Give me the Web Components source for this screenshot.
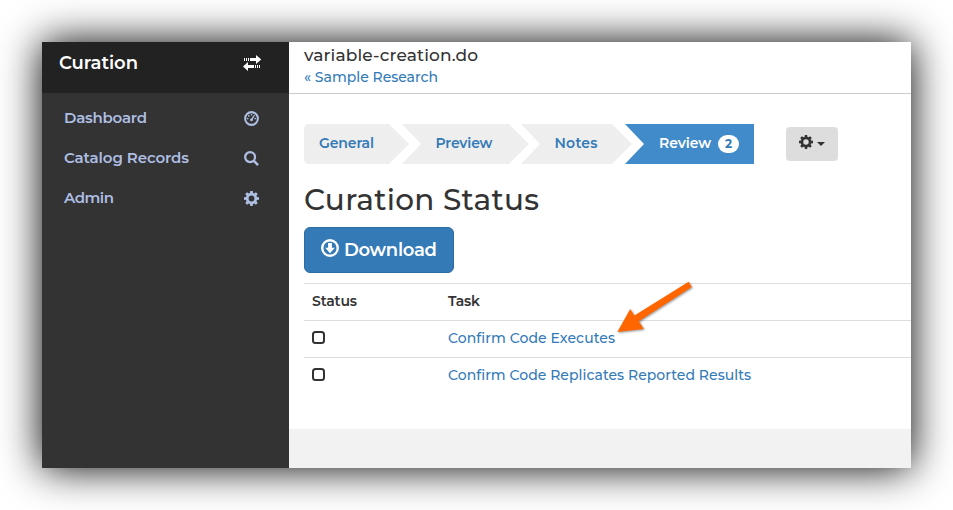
<!DOCTYPE html>
<html lang="en"><head><meta charset="utf-8"><title>Curation</title>
<style>
html,body{margin:0;width:953px;height:510px;overflow:hidden;background:#fff}
body{font-family:Montserrat,Inter,"Open Sans",sans-serif;color:#333}
</style></head><body>
<curation-app></curation-app>
<script>
const define=(name,html,setup)=>customElements.define(name,class extends HTMLElement{
  connectedCallback(){
    if(this.shadowRoot)return;
    const t=document.createElement('template');t.innerHTML=html;
    this.attachShadow({mode:'open'}).append(t.content.cloneNode(true));
    if(setup)setup(this,this.shadowRoot);
  }
});

// Text tracked out evenly to a given run width.
define('tracked-text','<style>:host{display:inline-block;white-space:pre;flex:none}span{display:inline-block}</style><span><slot></slot></span>',(el,r)=>{
  const s=r.querySelector('span'),w=+el.getAttribute('width'),n=el.textContent.length;
  const ls=(w-s.getBoundingClientRect().width)/(n-1);
  s.style.letterSpacing=ls+'px';s.style.marginRight=-ls+'px';
});

const gear='<path fill-rule="evenodd" d="M6.7 0h2.6l.4 2.2 1.2.5L12.7 1.4l1.9 1.9-1.3 1.8.5 1.2 2.2.4v2.6l-2.2.4-.5 1.2 1.3 1.8-1.9 1.9-1.8-1.3-1.2.5L9.3 16H6.7l-.4-2.2-1.2-.5-1.8 1.3-1.9-1.9 1.3-1.8-.5-1.2L0 9.3V6.7l2.2-.4.5-1.2-1.3-1.8 1.9-1.9 1.8 1.3 1.2-.5zM8 4.9a3.1 3.1 0 1 0 0 6.2a3.1 3.1 0 1 0 0-6.2z"/>';
const icons={
  gear,
  swap:'<path d="M1 3h1v3H1zM3 3h1v3H3zM5 3h1v3H5zM7 3h6V0l5.2 4.5L13 9V6H7zM17 10h-1v3h1zM15 10h-1v3h1zM13 10h-1v3h1zM11 10H5V7L0 11.5 5 16v-3h6z"/>',
  dash:'<circle cx="8" cy="8" r="6.8" fill="none" stroke="currentColor" stroke-width="2.2"/><circle cx="3.9" cy="8" r=".9"/><circle cx="5.1" cy="5.2" r=".9"/><circle cx="8" cy="4" r=".9"/><circle cx="12" cy="8" r=".9"/><path d="M10.7 4.1l1 .7-2.3 3.6a1.6 1.6 0 1 1-1.3-.7z"/>',
  search:'<circle cx="6.5" cy="6.5" r="5.3" fill="none" stroke="currentColor" stroke-width="2.4"/><path d="M10.2 10.2l4.8 4.8" stroke="currentColor" stroke-width="2.8"/>',
  down:'<circle cx="8" cy="8" r="6.9" fill="none" stroke="currentColor" stroke-width="2.1"/><path d="M6.3 3.5h3.4v4.2h2.6L8 12.6 3.7 7.7h2.6z"/>'
};
define('ui-icon','<style>:host{display:block;flex:none}svg{display:block;fill:currentColor}</style><svg></svg>',(el,r)=>{
  const s=r.querySelector('svg'),n=el.getAttribute('name'),w=el.getAttribute('size')||15;
  s.setAttribute('viewBox',n==='swap'?'0 0 18 16':'0 0 16 16');
  s.setAttribute('width',n==='swap'?18:w);s.setAttribute('height',w);s.innerHTML=icons[n];
});

define('side-item','<style>:host{display:flex;height:40px;align-items:center;justify-content:space-between;padding:0 30px 0 22px;color:#afbfe3;font-size:15px;font-weight:600;line-height:40px}</style><slot></slot><slot name="icon"></slot>');

define('side-bar',`<style>
:host{display:block;background:#333;width:247px}
header{background:#222;height:51px;box-sizing:border-box;display:flex;align-items:center;justify-content:space-between;padding:0 28px 9px 17px;color:#fff;font-size:18px;font-weight:600;line-height:42px}
nav{padding-top:5px}
</style><header><tracked-text width="79">Curation</tracked-text><ui-icon name="swap" size="16"></ui-icon></header>
<nav>
<side-item><tracked-text width="83">Dashboard</tracked-text><ui-icon slot="icon" name="dash"></ui-icon></side-item>
<side-item><tracked-text width="125">Catalog Records</tracked-text><ui-icon slot="icon" name="search"></ui-icon></side-item>
<side-item><tracked-text width="50">Admin</tracked-text><ui-icon slot="icon" name="gear"></ui-icon></side-item>
</nav>`);

define('page-head',`<style>
:host{display:flex;flex-direction:column;height:51px;border-bottom:1px solid #ccc;padding-left:15px}
.t{font-size:17px;line-height:26px;height:26px;font-weight:500}.s{font-size:14px;font-weight:500;line-height:18px;color:#337ab7}
</style><div class="t"><tracked-text width="174">variable-creation.do</tracked-text></div><div class="s"><tracked-text width="134">« Sample Research</tracked-text></div>`);

define('step-item',`<style>
:host{display:flex;box-sizing:border-box;height:40px;background:#eee;color:#337ab7;font-size:14px;font-weight:600;line-height:38px;align-items:flex-start;
clip-path:polygon(0 0,calc(100% - 20px) 0,100% 50%,calc(100% - 20px) 100%,0 100%,19px 50%)}
:host([first]){border-radius:5px 0 0 5px;clip-path:polygon(0 0,calc(100% - 20px) 0,100% 50%,calc(100% - 20px) 100%,0 100%)}
:host([active]){background:#428bca;color:#fff;clip-path:polygon(0 0,100% 0,100% 100%,0 100%,19px 50%)}
</style><slot></slot>`);

define('step-bar',`<style>
:host{display:flex;height:40px}
step-item:nth-child(2){width:105px;padding-left:15px}
step-item:nth-child(3){width:127px;padding-left:33.5px;margin-left:-7px}
step-item:nth-child(4){width:111px;padding-left:33.5px;margin-left:-8px}
step-item:nth-child(5){width:129px;padding-left:34px;margin-left:-7px}
.badge{width:21px;height:18px;margin:11px 0 0 7px;border-radius:9px;background:#fff;color:#337ab7;font-size:12px;font-weight:700;line-height:18px;text-align:center}
button{width:52px;height:34px;margin:3px 0 0 32px;padding:0 12px 4px 13px;border:0;border-radius:4px;background:#ddd;color:#333;display:flex;align-items:center;gap:4px}
i{border:4px solid transparent;border-top-color:#333;border-bottom:0;margin-top:4px}
</style>
<step-item first><tracked-text width="55">General</tracked-text></step-item>
<step-item><tracked-text width="57">Preview</tracked-text></step-item>
<step-item><tracked-text width="43">Notes</tracked-text></step-item>
<step-item active><tracked-text width="52">Review</tracked-text><span class="badge">2</span></step-item>
<button><ui-icon name="gear" size="14"></ui-icon><i></i></button>`);

define('download-button',`<style>
:host{display:flex;box-sizing:border-box;width:150px;height:46px;border:1px solid #2e6da4;border-radius:6px;background:#337ab7;color:#fff;padding:0 16px;align-items:center;gap:5px;font-size:18px;font-weight:600;line-height:44px}
ui-icon{margin-top:-4px}
</style><ui-icon name="down" size="18"></ui-icon><slot></slot>`);

define('task-row',`<style>
:host{display:grid;grid-template-columns:136px 1fr;box-sizing:border-box;height:37px;border-top:1px solid #ddd;padding-left:8px;font-size:14px;line-height:34px;font-weight:500}
:host([head]){font-weight:600}
:host(:not([head])){color:#337ab7}
i{display:block;box-sizing:border-box;width:13px;height:13px;margin-top:10px;border:2px solid #333;border-radius:3.5px}
</style><slot name="status"><i></i></slot><slot></slot>`);

define('callout-arrow',`<style>:host{position:absolute;left:570px;top:236px;width:90px;height:62px}svg{display:block;overflow:visible;filter:drop-shadow(1px 1px 1px #0006)}</style>
<svg width="90" height="62"><path fill="#f60" d="M5.3 54 18.2 31l4.2 6.4L76.6 3.8l3.2 5.2L26.8 43.2l5 7.8z"/></svg>`);

define('curation-app',`<style>
:host{display:block;box-sizing:border-box;padding:42px;width:953px;height:510px}
.window{position:relative;display:flex;width:869px;height:426px;background:#f2f2f2;box-shadow:0 0 39px #000}
main{flex:1;min-width:0}
.page{background:#fff;height:387px}
.body{padding:30px 0 0 15px}
h1{margin:15px 0 8px;height:40px;font-size:29.5px;font-weight:500;line-height:40px}
task-row:first-of-type{margin-top:10px}
</style>
<div class="window"><side-bar></side-bar><main><div class="page"><page-head></page-head><div class="body">
<step-bar></step-bar>
<h1><tracked-text width="235">Curation Status</tracked-text></h1>
<download-button><tracked-text width="93">Download</tracked-text></download-button>
<task-row head><tracked-text slot="status" width="45">Status</tracked-text><tracked-text width="32">Task</tracked-text></task-row>
<task-row><tracked-text width="167">Confirm Code Executes</tracked-text></task-row>
<task-row><tracked-text width="303">Confirm Code Replicates Reported Results</tracked-text></task-row>
</div></div></main><callout-arrow></callout-arrow></div>`);
</script></body></html>
